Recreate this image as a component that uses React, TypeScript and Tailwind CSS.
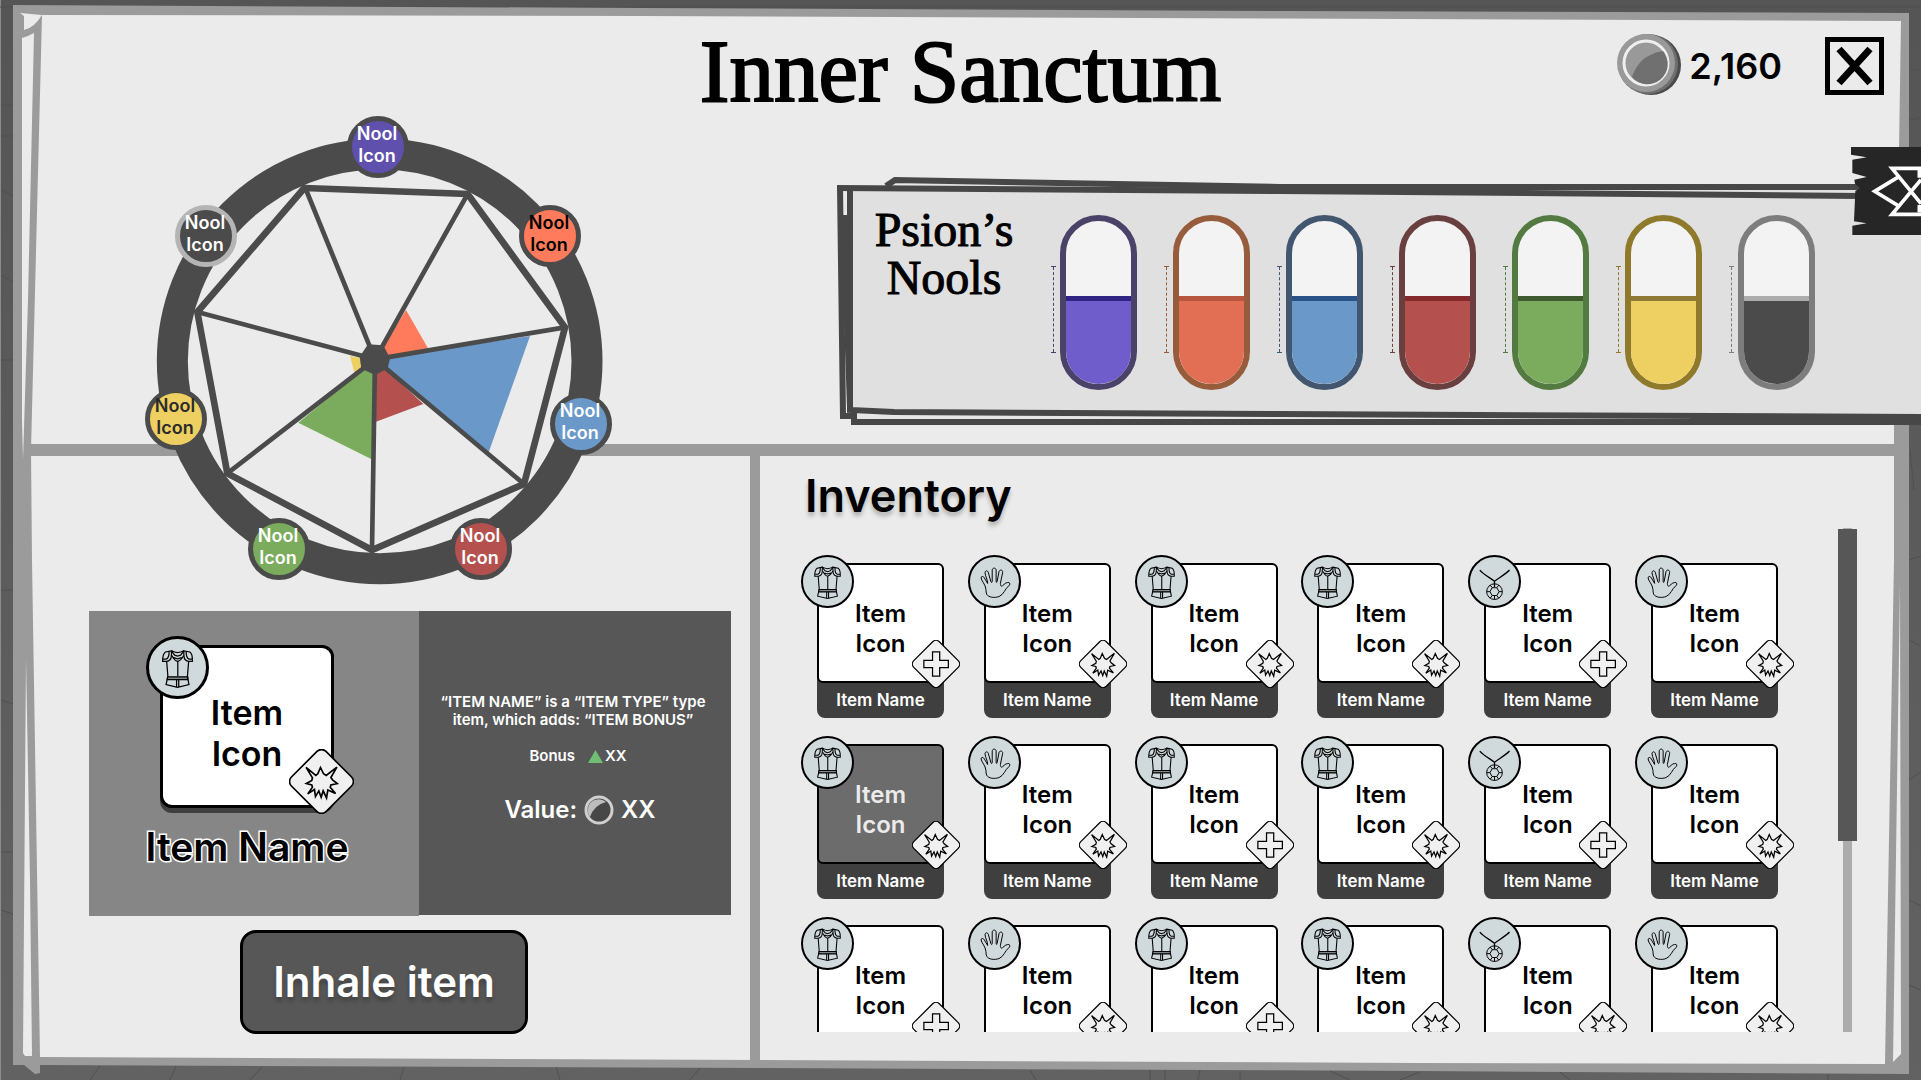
import React from "react";

type GearType = "vest" | "hand" | "amulet";
type Modifier = "plus" | "burst";
type Item = { gear: GearType; mod: Modifier; selected?: boolean };

const gearColumns: GearType[] = ["vest", "hand", "vest", "vest", "amulet", "hand"];
const modRows: Modifier[][] = [
  ["plus", "burst", "burst", "burst", "plus", "burst"],
  ["burst", "burst", "plus", "burst", "plus", "burst"],
  ["plus", "burst", "plus", "burst", "burst", "burst"],
];
const items: Item[] = modRows.flatMap((row, r) =>
  row.map((mod, c) => ({ gear: gearColumns[c], mod, selected: r === 1 && c === 0 })),
);

const nools = [
  { name: "Purple", place: "left-[202px] top-[1px]", look: "bg-[#5f50ad] border-[#4b4b4b] text-white" },
  { name: "Orange", place: "left-[374px] top-[90px]", look: "bg-[#ff7b5b] border-[#4b4b4b] text-black" },
  { name: "Blue", place: "left-[405px] top-[278px]", look: "bg-[#6998c9] border-[#4b4b4b] text-white" },
  { name: "Red", place: "left-[305px] top-[403px]", look: "bg-[#b4514e] border-[#4b4b4b] text-white" },
  { name: "Green", place: "left-[103px] top-[403px]", look: "bg-[#7bab5c] border-[#4b4b4b] text-white" },
  { name: "Yellow", place: "left-[0px] top-[273px]", look: "bg-[#eecf62] border-[#4b4b4b] text-[#2b2b2b]" },
  { name: "Gray", place: "left-[30px] top-[90px]", look: "bg-[#4b4b4b] border-[#b5b5b5] text-white" },
];

const pills = [
  { name: "Purple", rim: "border-[#4a4269]", fill: "bg-[#6f5dcb] border-[#2f2384]" },
  { name: "Orange", rim: "border-[#965c3c]", fill: "bg-[#e26f53] border-[#b8553f]" },
  { name: "Blue", rim: "border-[#42566f]", fill: "bg-[#6998c9] border-[#2b5189]" },
  { name: "Red", rim: "border-[#693f40]", fill: "bg-[#b4514e] border-[#84292c]" },
  { name: "Green", rim: "border-[#537a40]", fill: "bg-[#7bab5c] border-[#3e5a2e]" },
  { name: "Yellow", rim: "border-[#8f792a]", fill: "bg-[#eecf62] border-[#8f7a35]" },
  { name: "Gray", rim: "border-[#7d7d7d]", fill: "bg-[#4b4b4b] border-[#adadad]" },
];

function Frame() {
  return (
    <svg className="absolute inset-0 h-full w-full" viewBox="0 0 1921 1080" preserveAspectRatio="none" aria-hidden="true">
      <defs>
        <linearGradient id="wall" x1="0" y1="0" x2="0" y2="1">
          <stop offset="0" stopColor="#555555" />
          <stop offset="1" stopColor="#626262" />
        </linearGradient>
      </defs>
      <rect width="1921" height="1080" fill="url(#wall)" />
      <rect width="1" height="1080" fill="#8c8c8c" />
      <g stroke="#505050" strokeWidth="1" fill="none">
        <path d="M0 7H1921M1 105H13M1 136H13M1 190L13 196M1 275L13 282M1 360H13M1 590H13M1 700L13 704M1 852H13M1 910L13 914" />
        <path d="M1909 70H1921M1909 120L1921 118M1910 450L1914 490M1909 560L1921 556M1909 640L1921 646M1909 780L1921 772M1909 900L1921 906M1909 985L1921 990" />
        <path d="M90 1080L100 1066M170 1080L176 1066M250 1080L262 1067M400 1080L404 1067M560 1080L556 1067M690 1080L700 1068M1030 1070L1036 1080M1150 1070V1080M1165 1070V1080M1200 1070L1198 1080M1240 1071V1080M1330 1071L1350 1080M1400 1080L1420 1072M1560 1072L1570 1080M1828 1074V1080" />
      </g>
      <path
        d="M13 5L640 8L1280 11L1909 13V1074L1420 1071L760 1068L40 1065V1073L35 1074L24 1065H13Z"
        fill="#9b9b9b"
      />
      <path
        d="M42 15L640 16L1280 18.500L1901 21L1899 150L1894 420V560L1885 1064L1420 1063L760 1060L40 1057L32 560L31 450Z"
        fill="#ebebeb"
      />
      <path d="M20 13L42 15Q34 28 24 30V16Z" fill="#ebebeb" />
      <path d="M22 38Q29 36 34 33L28 300L23 460L22 420Z" fill="#ebebeb" />
      <path d="M26 658L30 880L32 1056H25L23 1053Z" fill="#ebebeb" />
      <path d="M1900 583L1901 1054L1893 1062Z" fill="#ebebeb" />
    </svg>
  );
}

function Wheel() {
  return (
    <div className="relative z-10 h-[470px] w-[470px] shrink-0">
      <svg className="h-full w-full" viewBox="75 45 1410 1410" role="img" aria-label="Nool balance wheel">
        <circle cx="779" cy="784" r="622" fill="#ebebeb" stroke="#4b4b4b" strokeWidth="93" />
        <path d="M765 778L858 630L925 746Z" fill="#ff7b5b" />
        <path d="M765 778L1230 708L1106 1057Z" fill="#6998c9" />
        <path d="M765 778L910 912L768 965Z" fill="#b4514e" />
        <path d="M765 778L755 1078L535 968Z" fill="#7bab5c" />
        <path d="M765 785L704 822L690 767Z" fill="#eecf62" />
        <path
          d="M553 264L1043 282L1335 682L1212 1152L756 1350L322 1120L232 636Z"
          fill="none"
          stroke="#4b4b4b"
          strokeWidth="20"
        />
        <path
          d="M765 778L556 264M765 778L1043 282M765 778L1335 682M765 778L1212 1152M765 778L756 1350M765 778L322 1120M765 778L232 636"
          stroke="#4b4b4b"
          strokeWidth="14"
        />
        <path d="M744 733L790 736L810 775L803 805L766 825L724 806L719 770Z" fill="#4b4b4b" />
      </svg>
      {nools.map((n) => (
        <button
          key={n.name}
          type="button"
          aria-label={`${n.name} Nool Icon`}
          className={`absolute flex h-[62px] w-[62px] items-center justify-center rounded-full border-[5px] pr-[2px] pb-1 text-center text-[18px] leading-[22px] font-semibold ${n.place} ${n.look}`}
        >
          <span className="block w-[42px]">Nool Icon</span>
        </button>
      ))}
    </div>
  );
}

function NoolPanel() {
  return (
    <section aria-label="Psion’s Nools" className="relative mt-[57px] ml-[219px] h-[256px] min-w-0 flex-1">
      <svg className="absolute inset-0 h-full w-full" viewBox="834 172 1087 256" preserveAspectRatio="none" aria-hidden="true">
        <path d="M838 186L850 187V421H842Z" fill="#ebebeb" />
        <path d="M850 188L1280 191L1921 196V417H850Z" fill="#e0e0e0" />
        <path d="M890 184L896 180L1280 187H1921V196L1280 191Z" fill="#e0e0e0" />
        <path d="M852 410L894 413L1280 415L1921 418V422H854Z" fill="#e6e6e6" />
        <g fill="none" stroke="#474747" strokeWidth="6">
          <path d="M837 188L1280 191L1860 196" />
          <path d="M886 186L895 180L1280 187H1860" />
          <path d="M840 186L843 416H852" />
          <path d="M850 188V410L894 412L1280 414L1921 417" />
          <path d="M845 215L846 290L850 408" />
          <path d="M854 412V422H1921" />
        </g>
        <path d="M1690 417H1921V424H1690Z" fill="#474747" />
      </svg>
      <div className="relative flex h-full items-start pr-[106px]">
        <h2 className="mt-[34px] ml-[35px] w-[150px] text-center font-['Liberation_Serif',serif] text-[48px] leading-[48px] [-webkit-text-stroke:1px_black]">
          Psion’s Nools
        </h2>
        <ul className="mt-[43px] ml-auto flex gap-9">
          {pills.map((p) => (
            <li key={p.name} aria-label={`${p.name} nool`} className="relative">
              <div className={`flex h-[175px] w-[77px] flex-col overflow-hidden rounded-full border-[6px] bg-[#f3f3f3] ${p.rim}`}>
                <div className={`mt-[75px] flex-1 border-t-[5px] ${p.fill}`} />
              </div>
              <span className={`absolute top-[51px] -left-[9px] h-[87px] w-[5px] border-y ${p.rim}`}>
                <span className={`ml-[2px] block h-full w-px border-l border-dashed ${p.rim}`} />
              </span>
            </li>
          ))}
        </ul>
      </div>
      <button type="button" aria-label="Open side drawer" className="absolute -top-[25px] right-0 h-[88px] w-[70px]">
        <svg className="h-full w-full" viewBox="153 80 210 264" aria-hidden="true">
          <path
            d="M153 80H363V344H157V316L200 309L162 303L166 212L180 204L165 190L163 178L200 170L157 158V118L200 111L153 103Z"
            fill="#262626"
          />
          <path
            d="M363 144H276L363 250M363 282H276L363 178M298 168L224 213L298 258M358 150V172M358 254V276"
            fill="none"
            stroke="white"
            strokeWidth="11"
          />
        </svg>
      </button>
    </section>
  );
}

function GearIcon({ gear }: { gear: GearType }) {
  if (gear === "vest") {
    return (
      <svg className="h-full w-full" viewBox="48 50 184 184" fill="none" stroke="black" strokeWidth="4" aria-hidden="true">
        <path d="M121 88L101 92Q92 98 92 122H105Q119 120 120 106ZM160 88L180 92Q189 98 188 122H176Q162 120 161 106Z" />
        <path d="M93 115H103Q113 112 113 91M187 115H177Q168 112 168 91" />
        <path d="M121 88Q130 93 140 94Q151 93 160 88M121 90L131 102L140 105L150 102L160 90M122 103Q130 120 140 122Q151 120 160 103M128 110L140 114L153 110" />
        <path d="M105 122L109 171L103 197L140 206L177 197L172 171L176 122M141 122V171M137 181V205M144 181V205" />
        <path d="M108 172H173V181H107Z" fill="#7e8788" />
      </svg>
    );
  }
  if (gear === "hand") {
    return (
      <svg className="h-full w-full" viewBox="537 34 150 150" fill="none" stroke="black" strokeWidth="3" aria-hidden="true">
        <path d="M586 134C585 118 571 106 571 98C571 92 578 92 581 98L591 115C592 104 583 92 583 82C584 74 591 75 593 81L601 110C604 114 605 111 605 108V74C606 66 616 66 617 74V108C617 113 619 113 620 109L626 78C629 71 638 74 637 81L630 115C630 122 634 127 638 121C643 114 650 112 656 112C661 114 659 120 655 123C645 130 640 150 626 155C612 160 594 158 588 148C586 144 586 138 586 134Z" />
      </svg>
    );
  }
  return (
    <svg className="h-full w-full" viewBox="28 34 150 150" fill="none" stroke="black" strokeWidth="4" aria-hidden="true">
      <path d="M58 74C70 88 90 98 103 108C116 98 136 88 149 74M103 108V126" />
      <circle cx="103" cy="140" r="24" strokeWidth="3" />
      <path
        d="M96 128H110L117 140L110 152H96L89 140ZM96 128L90 120M110 128L116 120M117 140H127M110 152L116 160M96 152L90 160M89 140H79M103 152V164"
        strokeWidth="3"
      />
    </svg>
  );
}

function ModBadge({ mod, className }: { mod: Modifier; className: string }) {
  return (
    <svg className={`absolute ${className}`} viewBox="477 388 194 194" role="img" aria-label={mod}>
      <rect x="501" y="412" width="146" height="146" rx="19" transform="rotate(45 574 485)" fill="#f0f0f0" stroke="black" strokeWidth="5" />
      {mod === "plus" ? (
        <path d="M560 436H589V470H624V500H589V534H560V500H525V470H560Z" fill="none" stroke="black" strokeWidth="5" />
      ) : (
        <path
          d="M528 443L557 467L563 462L571 443L580 462L588 467L620 442L602 473L607 480L621 491L602 495L600 502L616 521L593 510L589 534L579 513L573 532L566 513L556 530L553 509L533 522L547 502L545 495L529 491L545 482L547 474Z"
          fill="none"
          stroke="black"
          strokeWidth="5"
        />
      )}
    </svg>
  );
}

function ItemCard({ item }: { item: Item }) {
  return (
    <button
      type="button"
      aria-pressed={!!item.selected}
      className="relative flex h-[155px] w-[127px] flex-col rounded-lg bg-[#3f3f3f] text-center font-semibold"
    >
      <span
        className={`flex h-[120px] w-full items-center justify-center rounded-md border-2 border-black pt-3 text-[24px] leading-[30px] ${
          item.selected ? "bg-[#6c6c6c] text-[#ebebeb]" : "bg-white text-black"
        }`}
      >
        <span className="w-[60px]">Item Icon</span>
      </span>
      <span className="flex w-full flex-1 items-center justify-center pb-[2px] text-[17px] leading-[22px] text-white">Item Name</span>
      <span className="absolute -top-2 -left-4 h-[53px] w-[53px] rounded-full border-2 border-black bg-[#d0dadc]">
        <GearIcon gear={item.gear} />
      </span>
      <ModBadge mod={item.mod} className="top-[77px] left-[95px] h-[48px] w-[48px]" />
    </button>
  );
}

function ItemDetail() {
  return (
    <div className="mt-[155px] mr-[19px] ml-[58px] grid h-[305px] grid-cols-[330fr_312fr]">
      <div className="flex flex-col items-center bg-[#868686] pr-[14px]">
        <div className="relative mt-[34px] h-[168px] w-[174px] rounded-xl bg-[#3f3f3f]">
          <div className="flex h-[163px] items-center justify-center rounded-xl border-[3px] border-black bg-white pt-3 text-center text-[34px] leading-[41px] font-semibold">
            <span className="w-[80px]">Item Icon</span>
          </div>
          <span className="absolute -top-[9px] -left-[14px] h-[63px] w-[63px] rounded-full border-[3px] border-black bg-[#d0dadc]">
            <GearIcon gear="vest" />
          </span>
          <ModBadge mod="burst" className="top-[104px] left-[129px] h-[65px] w-[65px]" />
        </div>
        <h3 className="mt-[10px] text-[39px] leading-[48px] font-semibold [paint-order:stroke] [-webkit-text-stroke:3px_white]">
          Item Name
        </h3>
      </div>
      <div className="flex h-[304px] flex-col items-center bg-[#575757] pt-[82px] text-center font-semibold text-white">
        <p className="w-[280px] pr-1 text-[15px] leading-[18px]">“ITEM NAME” is a “ITEM TYPE” type item, which adds: “ITEM BONUS”</p>
        <p className="mt-[17px] flex items-center pl-[6px] text-[15px] leading-[20px]">
          Bonus
          <svg className="mr-[2px] ml-[13px] h-[13px] w-[15px]" viewBox="0 0 15 13" aria-label="up">
            <path d="M7.500 0L15 13H0Z" fill="#6fbf73" />
          </svg>
          XX
        </p>
        <p className="mt-[29px] flex items-center pl-[10px] text-[24px] leading-[30px]">
          Value:
          <svg className="mx-[7px] h-[30px] w-[30px]" viewBox="0 0 30 30" aria-label="coins">
            <circle cx="15" cy="15" r="13" fill="#474747" stroke="#cfcfcf" strokeWidth="3" />
            <path d="M6 22A11 11 0 0 1 22 7Q10 10 6 22Z" fill="#bdbdbd" />
          </svg>
          XX
        </p>
      </div>
    </div>
  );
}

export default function App() {
  return (
    <div className="relative flex h-screen min-h-[960px] flex-col overflow-hidden font-['Inter',sans-serif] text-black">
      <Frame />
      <header className="relative grid h-[115px] grid-cols-[1fr_auto_1fr] items-start">
        <span />
        <h1 className="mt-[27px] font-['Liberation_Serif',serif] text-[89px] leading-[88px] whitespace-nowrap [-webkit-text-stroke:2px_black]">
          Inner Sanctum
        </h1>
        <div className="mt-[33px] mr-[37px] flex items-start justify-end">
          <svg className="h-[63px] w-[64px]" viewBox="0 0 64 63" aria-label="coins">
            <circle cx="34" cy="32" r="30" fill="#4a4a4a" />
            <circle cx="31" cy="31" r="30" fill="#6f6f6f" />
            <circle cx="29" cy="30" r="29" fill="#999999" />
            <circle cx="29" cy="30" r="22" fill="#999999" stroke="#efefef" strokeWidth="3" />
            <path d="M46 18A20 20 0 0 1 15 44Q22 22 46 18Z" fill="#707070" />
          </svg>
          <span className="mt-[11px] ml-2 text-[36px] leading-[44px] font-semibold">2,160</span>
          <button type="button" aria-label="Close" className="mt-1 ml-[43px] h-[58px] w-[59px] border-[5px] border-black">
            <svg className="h-full w-full" viewBox="0 0 49 48" aria-hidden="true">
              <path d="M9 7L40 41M40 7L9 41" stroke="black" strokeWidth="7" />
            </svg>
          </button>
        </div>
      </header>

      <div className="relative z-10 flex h-[329px] shrink-0 items-start pl-[145px]">
        <Wheel />
        <NoolPanel />
      </div>

      <main className="relative mr-[27px] mb-[19px] ml-[31px] grid min-h-0 flex-1 grid-cols-[729fr_1134fr] grid-rows-[minmax(0,1fr)] border-t-[12px] border-[#9b9b9b]">
        <section aria-label="Selected item" className="border-r-[10px] border-[#9b9b9b]">
          <ItemDetail />
          <button
            type="button"
            className="mt-[14px] ml-[209px] h-[104px] w-[288px] rounded-2xl border-[3px] border-black bg-[#575757] text-[42px] leading-[48px] font-semibold text-white [text-shadow:0_4px_4px_rgba(0,0,0,0.25)]"
          >
            Inhale item
          </button>
        </section>
        <section aria-label="Inventory" className="flex min-h-0 flex-col pt-3 pr-[37px] pb-[29px]">
          <h2 className="ml-[45px] text-[45px] leading-[56px] font-semibold [text-shadow:0_4px_4px_rgba(0,0,0,0.25)]">Inventory</h2>
          <div className="mt-1 flex min-h-0 flex-1">
            <div id="inventory" className="min-w-0 flex-1 overflow-x-hidden overflow-y-auto pt-[35px] pr-[60px] pl-[57px] [scrollbar-width:none]">
              <div className="grid grid-cols-[repeat(6,127px)] justify-between gap-y-[26px]">
                {items.map((item, i) => (
                  <ItemCard key={i} item={item} />
                ))}
              </div>
            </div>
            <div
              role="scrollbar"
              aria-label="Inventory scroll"
              aria-controls="inventory"
              aria-valuenow={0}
              className="relative flex w-[19px] justify-center"
            >
              <div className="w-[9px] bg-[#acacac]" />
              <div className="absolute top-px h-[62%] w-full bg-[#575757]" />
            </div>
          </div>
        </section>
      </main>
    </div>
  );
}
